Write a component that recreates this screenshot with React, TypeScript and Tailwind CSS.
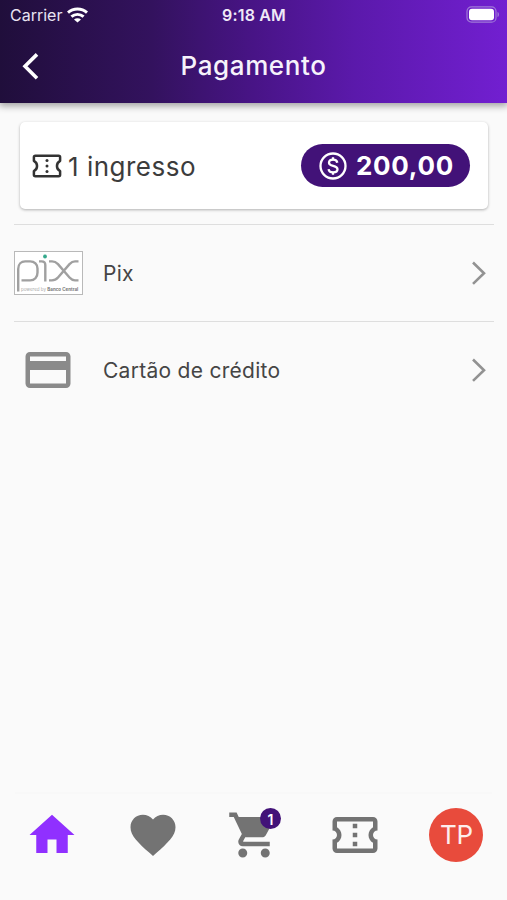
import React from "react";
import {
  MdCreditCard,
  MdFavorite,
  MdHome,
  MdOutlineConfirmationNumber,
  MdShoppingCart,
} from "react-icons/md";

function StatusBar() {
  return (
    <div className="grid h-[30px] grid-cols-3 items-center text-[16px] font-medium leading-[30px] text-white">
      <div className="flex items-center gap-[6px] pl-[10px]">
        <span className="font-normal text-[#e9e3f2]">Carrier</span>
        <svg className="-ml-px -mt-px" width="21" height="16" viewBox="0 0 21 16" fill="none" stroke="#fff" strokeWidth="3">
          <path d="M1 5.700C6.400.9 14.600.9 20 5.700" />
          <path d="M4.400 9.700c3.600-3.100 8.600-3.100 12.200 0" />
          <path d="M10.500 15.600 7 12.400c2-1.600 5-1.600 7 0Z" fill="#fff" stroke="none" />
        </svg>
      </div>
      <span className="whitespace-nowrap pl-px text-center font-semibold tracking-[0.15px] text-[#efe9f7]">9:18 AM</span>
      <div className="-mt-[2px] flex justify-end pr-[7px]">
        <svg width="34" height="17" viewBox="0 0 34 17">
          <rect x="1" y=".8" width="29" height="15.4" rx="4.5" fill="none" stroke="#a079d8" strokeWidth="1.2" />
          <rect x="3" y="2.8" width="25" height="11.4" rx="3" fill="#fff" />
          <path d="M31.5 6v5c2-.6 2-4.4 0-5Z" fill="#a079d8" />
        </svg>
      </div>
    </div>
  );
}

function Header() {
  return (
    <header className="h-[103px] bg-[linear-gradient(90deg,#200e3b_0%,#33125e_30%,#481486_50%,#5b19ab_70%,#721fd1_100%)] shadow-[0_2px_7px_1px_rgba(0,0,0,0.36)]">
      <StatusBar />
      <div className="grid h-[71px] grid-cols-[60px_1fr_60px] items-center">
        <svg className="ml-[20px]" width="22" height="30" viewBox="0 0 22 30" fill="none" stroke="#fff" strokeWidth="3.6">
          <path d="M17 3.4 5 15.3l12 12" />
        </svg>
        <h1 className="text-center text-[26px] font-medium leading-8 tracking-[0.6px] text-[#f6f2fb]">Pagamento</h1>
      </div>
    </header>
  );
}

function TicketIcon() {
  return (
    <svg width="30" height="24" viewBox="0 0 30 24" fill="none" stroke="#333" strokeWidth="2.5" strokeLinejoin="round">
      <path d="M3.400 1.700h23.200c.9 0 1.500.6 1.500 1.500v3.600c-4.200 2.300-4.200 8.100 0 10.400v3.600c0 .9-.6 1.500-1.500 1.500H3.400c-.9 0-1.500-.6-1.500-1.500v-3.600c4.200-2.300 4.200-8.100 0-10.400V3.200c0-.9.600-1.500 1.500-1.500Z" />
      <g fill="#333" stroke="none">
        <circle cx="15" cy="6.600" r="1.500" />
        <circle cx="15" cy="12" r="1.500" />
        <circle cx="15" cy="17.400" r="1.500" />
      </g>
    </svg>
  );
}

function DollarIcon() {
  return (
    <svg className="shrink-0" width="28" height="28" viewBox="0 0 28 28" fill="none" stroke="#fff" strokeWidth="2.300">
      <circle cx="14" cy="14" r="12.500" />
      <path d="M18.300 10.700c-.3-1.900-1.900-3-4.200-3-2.400 0-4.100 1.200-4.100 3.100 0 4.400 8.500 1.900 8.500 6.500 0 1.900-1.800 3.100-4.400 3.100-2.500 0-4.300-1.200-4.500-3.200" />
      <path d="M14 5.300v3M14 19.700v3" />
    </svg>
  );
}

function PixLogo() {
  return (
    <div className="relative h-[44px] w-[69px] border border-[#b9b9b9] bg-white">
      <svg className="block" width="67" height="42" viewBox="0 0 67 42" fill="none" stroke="#a0a0a0" strokeWidth="2.4">
        <path d="M3.2 39.5V17c0-5 3.2-7.6 7-7.6h5c4.200 0 7.300 3 7.300 7v4c0 5-3 8-7.300 8H6.500" />
        <path d="M24 9.400h2.500c2.500 0 3.800 1.300 3.800 3.600v16.500" />
        <path d="M34 9.400h3c3 0 4.500 1.200 6 2.700l11.500 13.400c1.500 1.700 3 2.900 5.500 2.900h3.500M63.500 9.400H60c-2.500 0-4 1.200-5.500 2.700L43 25.500c-1.500 1.700-3 2.900-6 2.900h-3" />
        <circle cx="30" cy="4.500" r="1.900" fill="#35a98c" stroke="none" />
      </svg>
      <div className="absolute bottom-[1px] left-[6px] whitespace-nowrap text-[4.500px] leading-[6px] text-[#aaa]">
        powered by <b className="text-[#777]">Banco Central</b>
      </div>
    </div>
  );
}

function PaymentRow({ icon, label }: { icon: React.ReactNode; label: string }) {
  return (
    <button className="flex h-[97px] w-full items-center border-t border-[#dedede] text-left">
      <span className="flex w-[69px] justify-center">{icon}</span>
      <span className="ml-[20px] flex-1 pt-[2px] text-[21px] tracking-[0.28px] text-[#454545]">{label}</span>
      <svg className="mr-[6px]" width="18" height="26" viewBox="0 0 18 26" fill="none" stroke="#929292" strokeWidth="2.6">
        <path d="m3 2.500 11 10.700-11 10.700" />
      </svg>
    </button>
  );
}

function BottomNav() {
  return (
    <nav className="mx-[15px] h-[108px] border-t-2 border-[#f8f8f8]">
      <div className="-mx-[15px] grid grid-cols-5 items-start pl-px pt-[14px] text-[54px] text-[#737373]">
        <span className="flex justify-center"><MdHome className="text-[#9030ff]" /></span>
        <span className="flex justify-center"><MdFavorite /></span>
        <span className="flex justify-center">
          <span className="relative">
            <MdShoppingCart />
            <span className="absolute left-[33px] top-0 flex size-[21px] items-center justify-center rounded-full bg-[#421278] pt-[3px] text-[14px] font-semibold leading-none text-white">
              1
            </span>
          </span>
        </span>
        <span className="flex justify-center"><MdOutlineConfirmationNumber /></span>
        <span className="flex justify-center">
          <span className="flex size-[54px] items-center justify-center rounded-full bg-[#e84b3c] text-[26px] leading-none tracking-[-0.3px] text-[#fdeeed]">
            TP
          </span>
        </span>
      </div>
    </nav>
  );
}

export default function App() {
  return (
    <div className="flex h-[900px] w-[507px] flex-col overflow-hidden bg-[#fafafa] font-['Inter','Liberation_Sans',sans-serif]">
      <Header />
      <main className="flex flex-1 flex-col">
        <section className="ml-[20px] mr-[19px] mt-[19px] flex h-[87px] items-center justify-between rounded-[5px] bg-white pl-[12px] pr-[18px] shadow-[0_1px_3px_rgba(0,0,0,0.3)]">
          <div className="flex items-center gap-[6px]">
            <TicketIcon />
            <span className="pt-px text-[26px] tracking-[0.5px] text-[#3c3c3c]">1 ingresso</span>
          </div>
          <div className="flex h-[43px] w-[169px] items-center gap-[9px] rounded-full bg-[#421278] pl-[18px] text-white">
            <DollarIcon />
            <span className="text-[26px] font-bold tracking-[0.7px]">200,00</span>
          </div>
        </section>
        <section className="ml-[14px] mr-[13px] mt-[15px]">
          <PaymentRow icon={<PixLogo />} label="Pix" />
          <PaymentRow icon={<MdCreditCard className="mr-px size-[54px] text-[#8a8a8a]" />} label="Cartão de crédito" />
        </section>
      </main>
      <BottomNav />
    </div>
  );
}
